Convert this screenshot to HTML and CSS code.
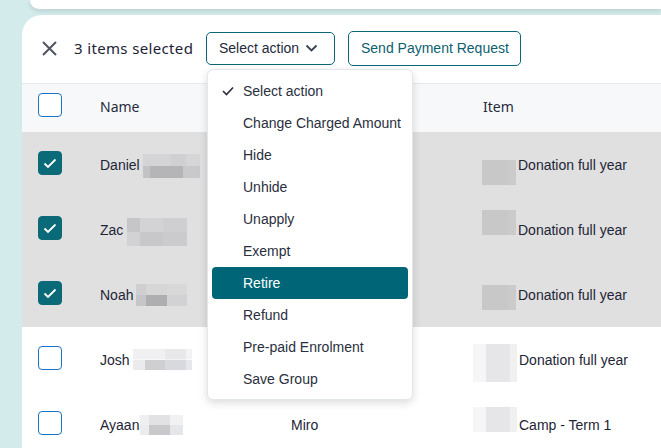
FILE: index.html
```html
<!DOCTYPE html>
<html>
<head>
<meta charset="utf-8">
<link rel="stylesheet" href="styles.css">
</head>
<body>
<div class="topcard"></div>
<div class="card">
  <div class="toolbar">
    <svg class="close" width="15" height="15" viewBox="0 0 15 15"><path d="M1 1L14 14M14 1L1 14" stroke="#50555f" stroke-width="2" fill="none"/></svg>
    <span class="count">3 items selected</span>
    <div class="select-wrap">
      <button class="btn select">Select action
        <svg width="13" height="8" viewBox="0 0 13 8"><path d="M1.5 1.5L6.5 6.5L11.5 1.5" stroke="#3a4050" stroke-width="1.8" fill="none"/></svg>
      </button>
      <ul class="menu">
        <li class="chosen"><svg class="tick" width="12" height="10" viewBox="0 0 12 10"><path d="M1 5L4.5 8.5L11 1.5" stroke="#2a2e3a" stroke-width="1.6" fill="none"/></svg>Select action</li>
        <li>Change Charged Amount</li>
        <li>Hide</li>
        <li>Unhide</li>
        <li>Unapply</li>
        <li>Exempt</li>
        <li class="active">Retire</li>
        <li>Refund</li>
        <li>Pre-paid Enrolment</li>
        <li>Save Group</li>
      </ul>
    </div>
    <button class="btn send">Send Payment Request</button>
  </div>

  <div class="row head">
    <div class="cbcell"><span class="cb"></span></div>
    <div class="hname">Name</div>
    <div></div>
    <div class="hname">Item</div>
  </div>

  <div class="row sel">
    <div class="cbcell"><span class="cb on"><svg width="14" height="11" viewBox="0 0 14 11"><path d="M1.5 5.5L5 9L12.5 1.5" stroke="#fff" stroke-width="1.8" fill="none"/></svg></span></div>
    <div class="name">Daniel <span class="blur b1"></span></div>
    <div></div>
    <div class="item"><span class="ph gray p1"></span>Donation full year</div>
  </div>
  <div class="row sel">
    <div class="cbcell"><span class="cb on"><svg width="14" height="11" viewBox="0 0 14 11"><path d="M1.5 5.5L5 9L12.5 1.5" stroke="#fff" stroke-width="1.8" fill="none"/></svg></span></div>
    <div class="name">Zac <span class="blur b2"></span></div>
    <div></div>
    <div class="item"><span class="ph gray p2"></span>Donation full year</div>
  </div>
  <div class="row sel">
    <div class="cbcell"><span class="cb on"><svg width="14" height="11" viewBox="0 0 14 11"><path d="M1.5 5.5L5 9L12.5 1.5" stroke="#fff" stroke-width="1.8" fill="none"/></svg></span></div>
    <div class="name">Noah <span class="blur b3"></span></div>
    <div></div>
    <div class="item"><span class="ph gray p3"></span>Donation full year</div>
  </div>
  <div class="row">
    <div class="cbcell"><span class="cb"></span></div>
    <div class="name">Josh <span class="blur b4"></span></div>
    <div></div>
    <div class="item"><span class="ph light tall"></span>Donation full year</div>
  </div>
  <div class="row">
    <div class="cbcell"><span class="cb"></span></div>
    <div class="name">Ayaan<span class="blur b5"></span></div>
    <div class="mid">Miro</div>
    <div class="item"><span class="ph light p5"></span>Camp - Term 1</div>
  </div>
</div>
</body>
</html>
```

FILE: styles.css
```css
* { box-sizing: border-box; }
html, body { margin: 0; padding: 0; }
body {
  width: 661px;
  height: 448px;
  overflow: hidden;
  background: #d4ebeb;
  font-family: "Liberation Sans", Arial, sans-serif;
  color: #1f2a3a;
}
.topcard {
  height: 9px;
  margin-left: 30px;
  background: #ffffff;
  border-bottom-left-radius: 16px;
  box-shadow: 0 2px 5px rgba(0, 0, 0, 0.12);
}
.card {
  margin-top: 6px;
  margin-left: 22px;
  width: 639px;
  background: #ffffff;
  border-top-left-radius: 20px;
  height: 433px;
  overflow: visible;
}
.toolbar {
  height: 68px;
  display: flex;
  align-items: center;
  padding-left: 20px;
  padding-bottom: 2px;
}
.close { flex: none; }
.count {
  flex: none;
  white-space: nowrap;
  margin-left: 17px;
  font-family: "Noto Sans", sans-serif;
  font-size: 15px;
  letter-spacing: 0.35px;
  color: #1d2236;
  width: 119px;
  margin-bottom: 1px;
}
.select-wrap {
  position: relative;
  flex: none;
  margin-left: 13px;
}
.btn {
  font-family: "Liberation Sans", Arial, sans-serif;
  font-size: 14px;
  background: #fff;
  border: 1px solid #0b6677;
  border-radius: 5px;
  display: flex;
  align-items: center;
  cursor: pointer;
  flex: none;
}
.select {
  width: 129px;
  height: 33px;
  padding: 0 0 0 12px;
  color: #1f2a3a;
  gap: 6px;
}
.send {
  margin-left: 13px;
  width: 173px;
  height: 35px;
  padding: 0 0 0 12px;
  color: #0e5f70;
}
.menu {
  position: absolute;
  top: 37px;
  left: 1px;
  width: 206px;
  margin: 0;
  padding: 5px 4px 4px;
  list-style: none;
  background: #fff;
  border: 1px solid #e3e6ea;
  border-radius: 6px;
  box-shadow: 0 3px 8px rgba(0, 0, 0, 0.14);
  z-index: 5;
}
.menu li {
  height: 32px;
  display: flex;
  align-items: center;
  padding-left: 31px;
  font-size: 14px;
  color: #2a2f3d;
  border-radius: 4px;
  position: relative;
}
.menu li.active {
  background: #006677;
  color: #ffffff;
}
.tick {
  position: absolute;
  left: 10px;
  top: 11px;
}
.row {
  display: grid;
  grid-template-columns: 78px 191px 192px 1fr;
  align-items: center;
  height: 65px;
  font-size: 14px;
}
.row.head {
  height: 49px;
  padding-bottom: 4px;
  background: #f7f8fa;
  border-top: 1px solid #e6e9ee;
}
.row.sel { background: #e0e0e0; }
.cbcell { padding-left: 16px; display: flex; margin-bottom: 3px; }
.head .cbcell { margin-bottom: 2px; }
.cb {
  width: 24px;
  height: 24px;
  border: 1.5px solid #1d74c4;
  border-radius: 4px;
  display: flex;
  align-items: center;
  justify-content: center;
  background: #fff;
}
.cb.on {
  background: #0b6a78;
  border-color: #0b6a78;
}
.hname {
  font-family: "Noto Sans", sans-serif;
  font-size: 14px;
  color: #262b3a;
}
.name {
  display: flex;
  align-items: center;
  color: #1e2536;
}
.blur {
  display: inline-block;
  margin-left: 3px;
}
.b1 {
  width: 57px; height: 24px;
  margin-top: 3px;
  background:
    linear-gradient(to right, #d4d4d6 0 50%, #d0d0d2 50% 75%, #d6d6d7 75%) top / 100% 50% no-repeat,
    linear-gradient(to right, #c3c3c5 0 12%, #b5b5b8 12% 70%, #c9c9cb 70%) bottom / 100% 50% no-repeat;
}
.b2 {
  width: 60px; height: 28px;
  margin-left: 4px;
  margin-top: 4px;
  background:
    linear-gradient(to right, #c6c6c8 0 22%, #d3d3d5 22% 60%, #cfcfd1 60%) top / 100% 50% no-repeat,
    linear-gradient(to right, #d2d2d4 0 22%, #c8c8ca 22% 60%, #cbcbcd 60%) bottom / 100% 50% no-repeat;
}
.b3 {
  width: 51px; height: 22px;
  margin-left: 3px;
  background:
    linear-gradient(to right, #cfcfd1 0 20%, #d6d6d7 20% 60%, #d8d8d9 60%) top / 100% 50% no-repeat,
    linear-gradient(to right, #c6c6c8 0 20%, #aeaeb1 20% 60%, #d2d2d4 60%) bottom / 100% 50% no-repeat;
}
.b4 {
  width: 59px; height: 21px;
  margin-left: 3px;
  background:
    linear-gradient(to right, #f0f0f2 0 55%, #e8e8ea 55% 90%, #f3f3f6 90%) top / 100% 50% no-repeat,
    linear-gradient(to right, #ebebed 0 20%, #cfcfd2 20% 55%, #d8d9dc 55% 90%, #e6e6ec 90%) bottom / 100% 50% no-repeat;
}
.b5 {
  width: 43px; height: 20px;
  margin-left: 1px;
  background:
    linear-gradient(to right, #efeef0 0 20%, #e2e2e4 20% 70%, #f1f1f3 70%) top / 100% 50% no-repeat,
    linear-gradient(to right, #ececee 0 20%, #c9c9cc 20% 70%, #e5e6e9 70%) bottom / 100% 50% no-repeat;
}
.mid { color: #1e2536; }
.item {
  display: flex;
  align-items: center;
  margin-left: -1px;
  color: #1e2536;
}
.ph {
  display: inline-block;
  flex: none;
  width: 34px;
  height: 25px;
  margin-right: 2px;
}
.ph.gray {
  background: linear-gradient(to right, #c8c8c9 0 75%, #cbcbcc 75%);
}
.p1 { margin-top: 16px; }
.p2 { margin-bottom: 14px; }
.p3 { margin-top: 6px; }
.ph.light {
  width: 44px;
  margin-left: -9px;
  background: linear-gradient(to right, #f6f6f7 0 30%, #e6e6e8 30% 85%, #f0f0f1 85%);
}
.ph.tall { height: 38px; margin-top: 6px; }
.p5 { margin-bottom: 10px; }
```
